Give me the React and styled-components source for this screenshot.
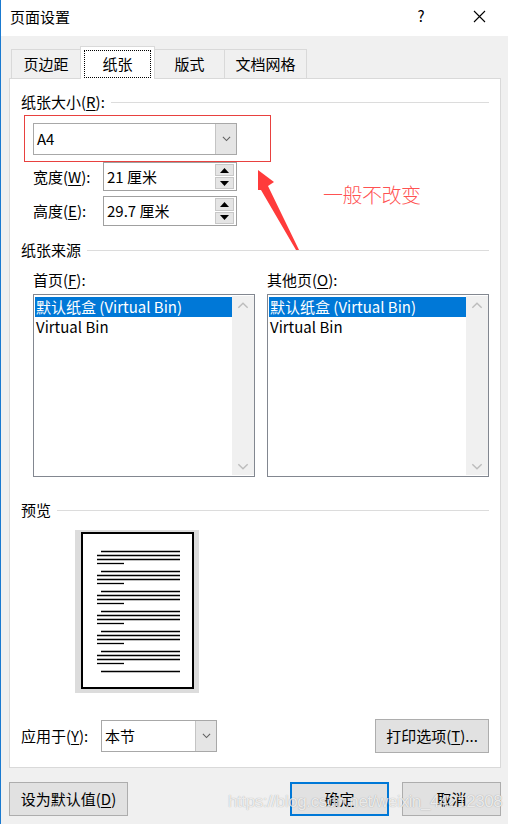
import React from 'react';
import styled, { createGlobalStyle } from 'styled-components';

const GlobalStyles = createGlobalStyle`
  body {
    margin: 0;
    font-family: "Noto Sans CJK SC", "Noto Sans", sans-serif;
    font-size: 15px;
    color: #000;
  }
  * { box-sizing: border-box; }
`;

const Window = styled.div`
  position: relative;
  width: 508px;
  height: 824px;
  background: #f0f0f0;
  border-left: 1px solid #1a7ad0;
  overflow: hidden;
  line-height: 20px;
`;

const TitleBar = styled.div`
  display: flex;
  align-items: center;
  height: 36px;
  padding-left: 9px;
  background: #fff;
`;

const Title = styled.div`
  flex: 1;
  margin-top: -3px;
`;

const TitleButton = styled.div`
  width: 58px;
  height: 36px;
  display: flex;
  align-items: center;
  justify-content: center;
  margin-top: -4px;
`;

const Body = styled.div`
  padding: 10px 7px 0 8px;
`;

const TabRow = styled.div`
  display: flex;
  align-items: flex-end;
  height: 32px;
  padding-left: 2px;
  position: relative;
  z-index: 1;
`;

const Tab = styled.div`
  width: ${(p) => p.w}px;
  height: ${(p) => (p.active ? 33 : 29)}px;
  margin-bottom: ${(p) => (p.active ? -1 : 0)}px;
  background: ${(p) => (p.active ? '#fff' : '#f0f0f0')};
  border: 1px solid #d9d9d9;
  border-bottom: none;
  margin-left: ${(p) => (p.first ? 0 : -1)}px;
  display: flex;
  align-items: center;
  justify-content: center;
  padding-bottom: ${(p) => (p.active ? 2 : 0)}px;
`;

const FocusRect = styled.span`
  display: flex;
  align-items: center;
  justify-content: center;
  width: 65px;
  height: 26px;
  outline: 1px dotted #000;
  margin-top: 3px;
`;

const Panel = styled.div`
  background: #fff;
  border: 1px solid #d9d9d9;
  padding: 13px 10px 14px 11px;
`;

const SectionHeader = styled.div`
  display: flex;
  align-items: center;
  gap: 6px;
  margin-top: ${(p) => p.mt || 0}px;
  &::after {
    content: '';
    flex: 1;
    height: 1px;
    background: #dcdcdc;
    margin-right: 1px;
  }
`;

const Indent = styled.div`
  padding-left: 12px;
`;

const U = styled.span`
  text-decoration: underline;
  text-underline-offset: 2px;
`;

const Combo = styled.div`
  display: flex;
  width: ${(p) => p.w}px;
  height: 32px;
  margin-top: ${(p) => p.mt || 0}px;
  border: 1px solid #a8a8a8;
  background: #fff;
`;

const ComboText = styled.div`
  flex: 1;
  display: flex;
  align-items: center;
  padding-left: ${(p) => p.pl || 3}px;
`;

const ComboButton = styled.div`
  width: 21px;
  background: #e5e5e5;
  border-left: 1px solid #c4c4c4;
  display: flex;
  align-items: center;
  justify-content: center;
`;

const SpinRow = styled.div`
  display: flex;
  align-items: center;
  margin-top: ${(p) => p.mt}px;
`;

const RowLabel = styled.div`
  width: ${(p) => p.w}px;
  flex-shrink: 0;
`;

const SpinBox = styled.div`
  display: flex;
  width: 134px;
  height: ${(p) => p.h}px;
  border: 1px solid #a0a0a0;
  padding: 1px 2px 1px 3px;
`;

const SpinValue = styled.div`
  flex: 1;
  display: flex;
  align-items: center;
`;

const SpinButtons = styled.div`
  width: 19px;
  display: flex;
  flex-direction: column;
  gap: 1px;
`;

const SpinButton = styled.div`
  flex: 1;
  background: #e5e5e5;
  border: 1px solid #c8c8c8;
  display: flex;
  align-items: center;
  justify-content: center;
`;

const Sources = styled.div`
  display: flex;
  gap: 12px;
  padding-left: 12px;
  margin-top: 10px;
`;

const SourceColumn = styled.div`
  width: 222px;
`;

const ListBox = styled.div`
  display: flex;
  height: 183px;
  margin-top: 4px;
  border: 1px solid #828790;
  padding: 1px 0 1px 1px;
`;

const ListItems = styled.div`
  flex: 1;
  padding-top: 1px;
`;

const ListItem = styled.div`
  height: 20px;
  padding-left: 1px;
  background: ${(p) => (p.selected ? '#0078d7' : 'transparent')};
  color: ${(p) => (p.selected ? '#fff' : '#000')};
  white-space: nowrap;
`;

const ScrollBar = styled.div`
  width: 22px;
  background: #f0f0f0;
  display: flex;
  flex-direction: column;
  justify-content: space-between;
  align-items: center;
  padding: 6px 0 5px;
`;

const PreviewWrap = styled.div`
  margin: 10px 0 0 54px;
  width: 124px;
  height: 163px;
`;

const ApplyRow = styled.div`
  display: flex;
  align-items: center;
  justify-content: space-between;
  margin-top: 26px;
  padding-right: 1px;
`;

const ApplyLeft = styled.div`
  display: flex;
  align-items: center;
`;

const Button = styled.div`
  width: ${(p) => p.w}px;
  height: 34px;
  display: flex;
  align-items: center;
  justify-content: center;
  background: #e1e1e1;
  border: ${(p) => (p.primary ? '2px solid #0078d7' : '1px solid #adadad')};
`;

const Footer = styled.div`
  display: flex;
  margin-top: 14px;
  gap: 13px;
`;

const Spacer = styled.div`
  flex: 1;
`;

/* annotations drawn on top of the screenshot */
const RedBox = styled.div`
  position: absolute;
  left: 23px;
  top: 115px;
  width: 247px;
  height: 47px;
  border: 1px solid #e8413f;
`;

const Note = styled.div`
  position: absolute;
  left: 322px;
  top: 185px;
  color: #ff5252;
  font-size: 20px;
  font-weight: 300;
  letter-spacing: -0.5px;
`;

const ArrowSvg = styled.svg`
  position: absolute;
  left: 249px;
  top: 160px;
`;

const Watermark = styled.div`
  position: absolute;
  left: 227px;
  top: 792px;
  font-family: "Liberation Sans", Arial, sans-serif;
  font-size: 17px;
  letter-spacing: -0.4px;
  white-space: nowrap;
  color: rgba(255, 255, 255, 0.8);
  text-shadow: 0 0 1px rgba(0, 0, 0, 0.35);
`;

const Chevron = ({ up, color = '#606060', size = 9 }) => (
  <svg width={size} height={size / 2 + 1} viewBox="0 0 10 6">
    <polyline
      points={up ? '1,5 5,1 9,5' : '1,1 5,5 9,1'}
      fill="none"
      stroke={color}
      strokeWidth="1.2"
    />
  </svg>
);

const Triangle = ({ up }) => (
  <svg width="9" height="5" viewBox="0 0 9 5">
    <polygon points={up ? '0,5 4.5,0 9,5' : '0,0 9,0 4.5,5'} fill="#000" />
  </svg>
);

const PagePreview = () => {
  const lines = [];
  for (let p = 0; p < 6; p++) {
    const y = 21.5 + p * 20;
    lines.push([26, 105, y], [22, 105, y + 4], [22, 105, y + 8], [22, 49, y + 12]);
  }
  lines.push([26, 105, 141.5]);
  return (
    <svg width="124" height="163" viewBox="0 0 124 163">
      <rect x="0" y="0" width="124" height="163" fill="#dcdcdc" />
      <rect x="7" y="3" width="111" height="155" fill="#fff" stroke="#000" strokeWidth="2" />
      {lines.map(([x1, x2, y], i) => (
        <line key={i} x1={x1} x2={x2} y1={y} y2={y} stroke="#000" strokeWidth="1.3" />
      ))}
    </svg>
  );
};

const Spinner = ({ label, value, h, mt }) => (
  <SpinRow mt={mt}>
    <RowLabel w={70}>{label}</RowLabel>
    <SpinBox h={h}>
      <SpinValue>{value}</SpinValue>
      <SpinButtons>
        <SpinButton><Triangle up /></SpinButton>
        <SpinButton><Triangle /></SpinButton>
      </SpinButtons>
    </SpinBox>
  </SpinRow>
);

const SourceList = ({ label }) => (
  <SourceColumn>
    <div>{label}</div>
    <ListBox>
      <ListItems>
        <ListItem selected>默认纸盒 (Virtual Bin)</ListItem>
        <ListItem>Virtual Bin</ListItem>
      </ListItems>
      <ScrollBar>
        <Chevron up color="#bdbdbd" size={12} />
        <Chevron color="#bdbdbd" size={12} />
      </ScrollBar>
    </ListBox>
  </SourceColumn>
);

export default function App() {
  return (
    <>
      <GlobalStyles />
      <Window>
        <TitleBar>
          <Title>页面设置</Title>
          <TitleButton>?</TitleButton>
          <TitleButton>
            <svg width="13" height="13" viewBox="0 0 13 13">
              <path d="M1 1 L12 12 M12 1 L1 12" stroke="#000" strokeWidth="1.1" />
            </svg>
          </TitleButton>
        </TitleBar>

        <Body>
          <TabRow>
            <Tab w={70} first>页边距</Tab>
            <Tab w={75} active><FocusRect>纸张</FocusRect></Tab>
            <Tab w={71}>版式</Tab>
            <Tab w={83}>文档网格</Tab>
          </TabRow>

          <Panel>
            <SectionHeader>
              <span>纸张大小(<U>R</U>):</span>
            </SectionHeader>
            <Indent>
              <Combo w={204} mt={11}>
                <ComboText>A4</ComboText>
                <ComboButton><Chevron /></ComboButton>
              </Combo>
              <Spinner label={<>宽度(<U>W</U>):</>} value="21 厘米" h={29} mt={7} />
              <Spinner label={<>高度(<U>E</U>):</>} value="29.7 厘米" h={30} mt={5} />
            </Indent>

            <SectionHeader mt={14}>
              <span>纸张来源</span>
            </SectionHeader>
            <Sources>
              <SourceList label={<>首页(<U>F</U>):</>} />
              <SourceList label={<>其他页(<U>O</U>):</>} />
            </Sources>

            <SectionHeader mt={23}>
              <span>预览</span>
            </SectionHeader>
            <PreviewWrap>
              <PagePreview />
            </PreviewWrap>

            <ApplyRow>
              <ApplyLeft>
                <RowLabel w={80}>应用于(<U>Y</U>):</RowLabel>
                <Combo w={116}>
                  <ComboText>本节</ComboText>
                  <ComboButton><Chevron /></ComboButton>
                </Combo>
              </ApplyLeft>
              <Button w={114}>打印选项(<U>T</U>)...</Button>
            </ApplyRow>
          </Panel>

          <Footer>
            <Button w={119}>设为默认值(<U>D</U>)</Button>
            <Spacer />
            <Button w={99} primary>确定</Button>
            <Button w={99}>取消</Button>
          </Footer>
        </Body>

        <RedBox />
        <Note>一般不改变</Note>
        <ArrowSvg width="60" height="100" viewBox="0 0 60 100">
          <polygon points="8,10 24,22 18,26 49,90 46,90 11,30 8,30" fill="#ff3b3b" />
        </ArrowSvg>
        <Watermark>https://blog.csdn.net/weixin_44212308</Watermark>
      </Window>
    </>
  );
}
